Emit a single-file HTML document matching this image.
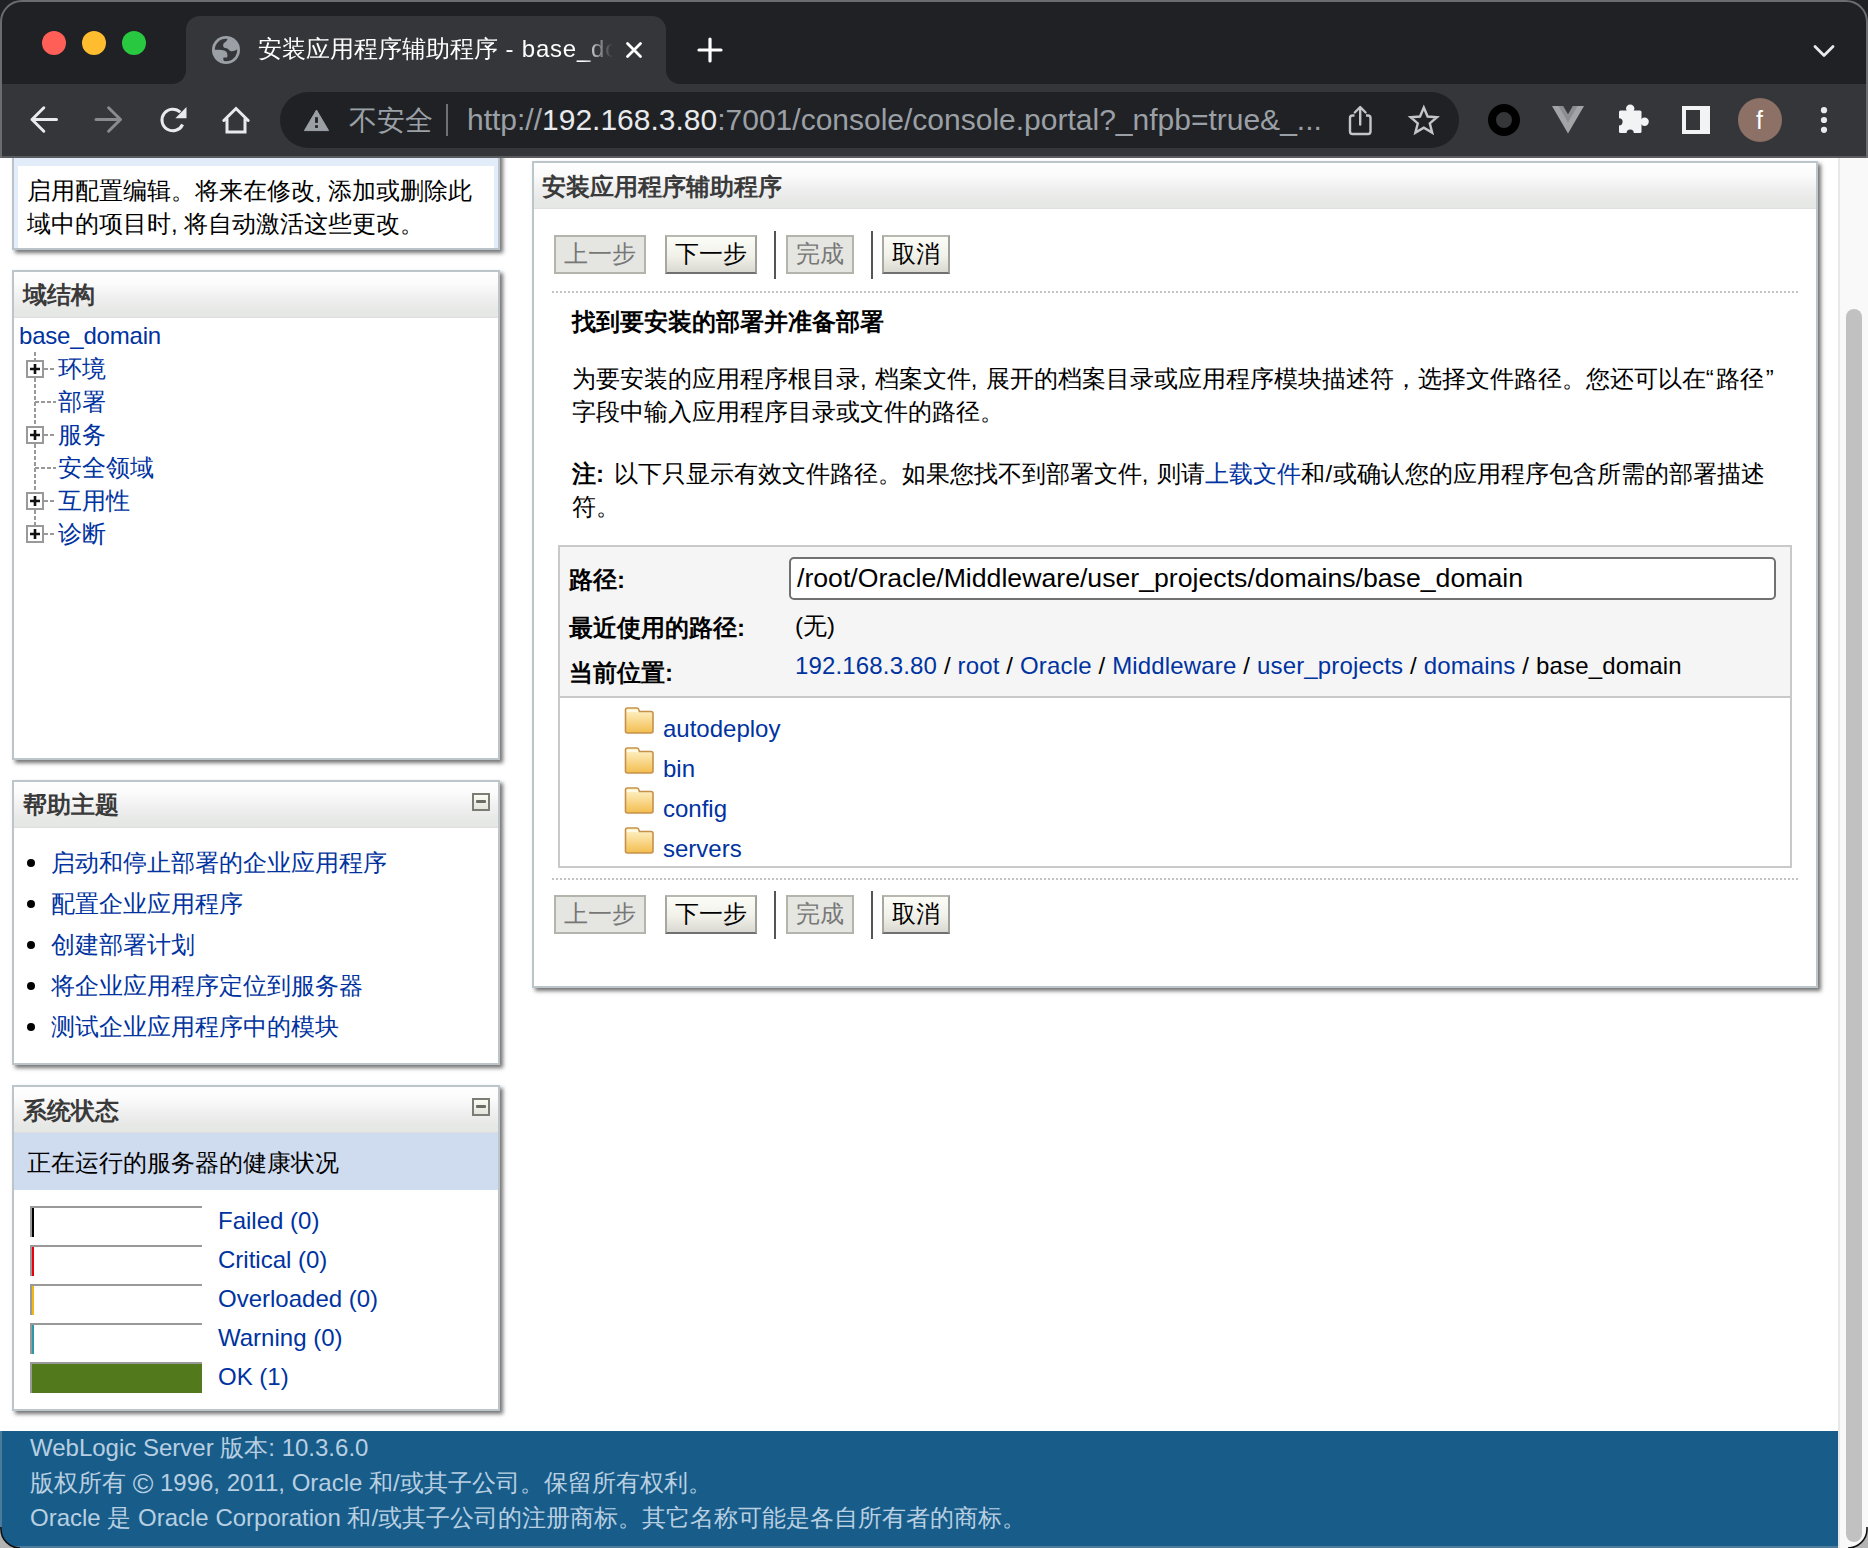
<!DOCTYPE html>
<html><head><meta charset="utf-8">
<style>
*{box-sizing:border-box}
html,body{margin:0;padding:0}
body{width:1868px;height:1548px;overflow:hidden;position:relative;background:#fff;font-family:"Liberation Sans",sans-serif;font-size:24px;line-height:33px;color:#000}
.a{position:absolute}
.nw{white-space:nowrap}
/* chrome */
#tabstrip{left:0;top:0;width:1868px;height:84px;background:#202124}
#toolbar{left:0;top:84px;width:1868px;height:72px;background:#35363a}
#tline{left:0;top:156px;width:1868px;height:2px;background:#5b5c60}
.tl{width:24px;height:24px;border-radius:50%;top:31px}
#tab{left:186px;top:16px;width:480px;height:68px;background:#35363a;border-radius:14px 14px 0 0}
.flare{width:14px;height:14px;top:70px;background:#35363a}
.flare i{position:absolute;left:0;top:0;width:14px;height:14px;background:#202124}
#omni{left:280px;top:92px;width:1179px;height:56px;border-radius:28px;background:#202124}
.w{color:#e8eaed}
.g{color:#9aa0a6}
/* page */
.panel{background:#fff;border:2px solid #bcc5c9;box-shadow:3px 3px 4px rgba(0,0,0,.55)}
.ph{left:0;top:0;right:0;height:46px;background:linear-gradient(#fefefe 0%,#fbfbfb 25%,#eeeeee 60%,#e6e8e5 85%,#e6e8e5 96%,#dcdcdc 100%)}
.pt{font-weight:bold;color:#3a3a3a}
.lk{color:#0033a0}
.mini{width:18px;height:18px;border:2px solid #7b7c74;background:linear-gradient(#fbfbf4,#e3e4db)}
.mini i{position:absolute;left:2px;top:5px;width:10px;height:3px;background:#6b6d64;border-radius:1px}
.btn{height:39px;border:2px solid #b3b4ac;background:#e5e6e1;color:#777;text-align:center;line-height:33px;padding-top:0}
.btn.en{border-color:#b8b8b0 #a0a09a #707070 #a8a8a0;background:linear-gradient(#fdfdf8,#f1f1ea 55%,#d9d9d2);color:#000}
.sep{width:2px;height:48px;background:#555}
.dot{height:2px;background-image:linear-gradient(90deg,#c4c4c4 50%,transparent 50%);background-size:4px 2px}
</style></head><body>

<!-- ===== Browser chrome ===== -->
<div id="tabstrip" class="a"></div>
<div id="toolbar" class="a"></div>
<div id="tline" class="a"></div>

<!-- chrome svg -->
<svg class="a" style="left:0;top:0" width="1868" height="158" viewBox="0 0 1868 158">
  <defs>
    <linearGradient id="fade" x1="0" x2="1" y1="0" y2="0">
      <stop offset="0" stop-color="#fff" stop-opacity="1"/>
      <stop offset="1" stop-color="#fff" stop-opacity="0"/>
    </linearGradient>
    <clipPath id="omc"><circle cx="226" cy="50" r="11.8"/></clipPath>
  </defs>
  <!-- tab -->
  <path d="M172,84 A14,14 0 0 0 186,70 L186,30 A14,14 0 0 1 200,16 L652,16 A14,14 0 0 1 666,30 L666,70 A14,14 0 0 0 680,84 Z" fill="#35363a"/>
  <!-- window border -->
  <path d="M1,158 L1,22 A21,21 0 0 1 22,1 L1846,1 A21,21 0 0 1 1867,22 L1867,158" fill="none" stroke="#6b6c6f" stroke-width="2"/>
  <!-- traffic lights -->
  <circle cx="54" cy="43" r="12" fill="#ff5f57"/>
  <circle cx="94" cy="43" r="12" fill="#febc2e"/>
  <circle cx="134" cy="43" r="12" fill="#28c840"/>
  <!-- globe -->
  <circle cx="226" cy="50" r="14" fill="#9aa0a6"/>
  <circle cx="226" cy="50" r="11.2" fill="#35363a"/>
  <g clip-path="url(#omc)" fill="#9aa0a6">
    <path d="M227.8,37 L242,37 L242,50 L237,49.6 C234,51.6 230.5,51.6 229.3,50.2 C228.3,48.8 226.5,48.2 224.3,47.8 C222.8,46.5 222.8,44 224,43 C226.3,41.8 227.6,40 227.8,37 Z"/>
    <path d="M210,49.8 L215,49.8 C220,49.8 224,50 226,51.5 C227.6,53 227.6,56 227.1,57.4 L223.5,57.4 C222.9,59 223.3,60.6 225,62 L210,64 Z"/>
  </g>
  <!-- close x -->
  <path d="M627.5,43.5 L640.5,56.5 M640.5,43.5 L627.5,56.5" stroke="#fff" stroke-width="2.8" stroke-linecap="round"/>
  <!-- plus -->
  <path d="M699,50 L721,50 M710,39 L710,61" stroke="#fff" stroke-width="3.2" stroke-linecap="round"/>
  <!-- chevron -->
  <path d="M1815,46.5 L1824,55.5 L1833,46.5" fill="none" stroke="#e8eaed" stroke-width="2.8" stroke-linecap="round" stroke-linejoin="round"/>
  <!-- back -->
  <path d="M56.5,119.5 L32,119.5 M43.8,107.8 L32,119.5 L43.8,131.2" fill="none" stroke="#e8eaed" stroke-width="3" stroke-linecap="round" stroke-linejoin="round"/>
  <!-- forward -->
  <path d="M96,119.5 L120.5,119.5 M108.6,107.8 L120.5,119.5 L108.6,131.2" fill="none" stroke="#8a8b8e" stroke-width="3" stroke-linecap="round" stroke-linejoin="round"/>
  <!-- reload -->
  <path d="M180.3,112.2 A10.8,10.8 0 1 0 182.6,124.5" fill="none" stroke="#e8eaed" stroke-width="3"/>
  <path d="M186.5,107 L186.5,118.2 L175.3,118.2 Z" fill="#e8eaed"/>
  <!-- home -->
  <path d="M223.8,120.5 L236,108.5 L248.2,120.5 M227,119 L227,132 L245,132 L245,119" fill="none" stroke="#e8eaed" stroke-width="3" stroke-linecap="round" stroke-linejoin="miter"/>
  <!-- omnibox -->
  <rect x="280" y="92" width="1179" height="56" rx="28" fill="#202124"/>
  <!-- warning -->
  <path d="M316.5,110 L328.6,130.6 L304.4,130.6 Z" fill="#9aa0a6" stroke="#9aa0a6" stroke-width="1" stroke-linejoin="round"/>
  <rect x="315.1" y="117.2" width="2.8" height="5.7" fill="#202124"/>
  <rect x="315.1" y="125.2" width="2.8" height="2.7" fill="#202124"/>
  <!-- separator -->
  <rect x="446" y="104" width="2" height="32" fill="#6f7175"/>
  <!-- share -->
  <path d="M1354.5,115.5 L1352.5,115.5 Q1350,115.5 1350,118 L1350,131.5 Q1350,134 1352.5,134 L1368,134 Q1370.5,134 1370.5,131.5 L1370.5,118 Q1370.5,115.5 1368,115.5 L1366,115.5" fill="none" stroke="#c4c5c7" stroke-width="2.4"/>
  <path d="M1360.2,124.5 L1360.2,107.5 M1354.8,112.5 L1360.2,107 L1365.6,112.5" fill="none" stroke="#c4c5c7" stroke-width="2.4" stroke-linecap="round" stroke-linejoin="round"/>
  <!-- star -->
  <path d="M1423.8,107.5 L1427.6,116.5 L1437,117.2 L1429.8,123.4 L1432.2,132.6 L1423.8,127.6 L1415.4,132.6 L1417.8,123.4 L1410.6,117.2 L1420,116.5 Z" fill="none" stroke="#c4c5c7" stroke-width="2.4" stroke-linejoin="miter"/>
  <!-- ring -->
  <circle cx="1504" cy="120" r="12" fill="none" stroke="#000" stroke-width="8"/>
  <!-- V -->
  <path d="M1552,106 L1584,106 L1568,133.5 Z" fill="#a3a4a6"/>
  <path d="M1558.5,106 L1577.5,106 L1568,122.5 Z" fill="#8c8d90"/>
  <path d="M1563.2,106 L1572.8,106 L1568,114.3 Z" fill="#35363a"/>
  <!-- puzzle -->
  <g fill="#f1f3f4">
    <rect x="1619" y="110.5" width="22.5" height="22.5" rx="1.5"/>
    <circle cx="1630.2" cy="108.6" r="4.2"/>
    <circle cx="1644.6" cy="121.8" r="4.2"/>
  </g>
  <circle cx="1619" cy="121.8" r="3.6" fill="#35363a"/>
  <circle cx="1630.2" cy="133.2" r="3.6" fill="#35363a"/>
  <!-- side panel -->
  <rect x="1682" y="106" width="28" height="28" fill="#f1f3f4"/>
  <rect x="1686" y="110" width="14" height="20" fill="#35363a"/>
  <!-- avatar -->
  <circle cx="1760" cy="120" r="22" fill="#8d7166"/>
  <!-- kebab -->
  <circle cx="1824" cy="110.2" r="3.1" fill="#e8eaed"/>
  <circle cx="1824" cy="120" r="3.1" fill="#e8eaed"/>
  <circle cx="1824" cy="129.8" r="3.1" fill="#e8eaed"/>
</svg>
<div class="a nw" style="left:258px;top:32px;font-size:24px;line-height:33px;color:#fff;width:355px;overflow:hidden;-webkit-mask-image:linear-gradient(90deg,#000 0,#000 325px,transparent 355px)">安装应用程序辅助程序<span style="letter-spacing:0.8px"> - base_domain</span></div>
<div class="a nw" style="left:1756px;top:104px;font-size:25px;line-height:33px;color:#fff;font-weight:normal">f</div>
<div class="a nw g" style="left:349px;top:104px;font-size:28px;line-height:33px">不安全</div>
<div class="a nw" style="left:467px;top:103px;font-size:30px;line-height:33px;color:#9aa0a6" id="url">http://<span style="color:#e8eaed">192.168.3.80</span>:7001/console/console.portal?_nfpb=true&amp;_...</div>


<!-- ===== Page ===== -->
<div class="a" style="left:0;top:158px;width:1868px;height:1390px;overflow:hidden">
<div class="a" style="left:0;top:-158px;width:1868px;height:1548px">

<!-- panel 1: change center -->
<div class="a panel" style="left:12px;top:100px;width:488px;height:150px;background:#e3edf9;border-color:#b9c3c9"></div>
<div class="a" style="left:18px;top:166px;width:476px;height:82px;background:#fff"></div>
<div class="a nw" style="left:27px;top:174px">启用配置编辑。将来在修改, 添加或删除此</div>
<div class="a nw" style="left:27px;top:207px">域中的项目时, 将自动激活这些更改。</div>

<!-- panel 2: domain structure -->
<div class="a panel" style="left:12px;top:270px;width:488px;height:490px"><div class="a ph"></div></div>
<div class="a nw pt" style="left:23px;top:278px">域结构</div>
<div class="a nw lk" style="left:19px;top:319px;letter-spacing:-0.2px">base_domain</div>
<svg class="a" style="left:20px;top:345px" width="40" height="200" viewBox="20 345 40 200">
  <g stroke="#999" stroke-width="2" stroke-dasharray="4 2" fill="none">
    <path d="M35,352 L35,360 M35,378 L35,426 M35,444 L35,492 M35,510 L35,525"/>
    <path d="M44,369 L56,369 M44,435 L56,435 M44,501 L56,501 M44,534 L56,534"/>
    <path d="M35,402 L56,402 M35,468 L56,468"/>
  </g>
  <g fill="#fff" stroke="#999" stroke-width="2">
    <rect x="27" y="361" width="16" height="16"/>
    <rect x="27" y="427" width="16" height="16"/>
    <rect x="27" y="493" width="16" height="16"/>
    <rect x="27" y="526" width="16" height="16"/>
  </g>
  <g stroke="#111" stroke-width="2.6">
    <path d="M30,369 L40,369 M35,364 L35,374"/>
    <path d="M30,435 L40,435 M35,430 L35,440"/>
    <path d="M30,501 L40,501 M35,496 L35,506"/>
    <path d="M30,534 L40,534 M35,529 L35,539"/>
  </g>
</svg>
<div class="a nw lk" style="left:58px;top:352px">环境</div>
<div class="a nw lk" style="left:58px;top:385px">部署</div>
<div class="a nw lk" style="left:58px;top:418px">服务</div>
<div class="a nw lk" style="left:58px;top:451px">安全领域</div>
<div class="a nw lk" style="left:58px;top:484px">互用性</div>
<div class="a nw lk" style="left:58px;top:517px">诊断</div>

<!-- panel 3: help -->
<div class="a panel" style="left:12px;top:780px;width:488px;height:285px"><div class="a ph"></div></div>
<div class="a nw pt" style="left:23px;top:788px">帮助主题</div>
<div class="a mini" style="left:472px;top:793px"><i></i></div>
<div class="a" style="left:27px;top:859px;width:8px;height:8px;border-radius:50%;background:#000"></div>
<div class="a" style="left:27px;top:900px;width:8px;height:8px;border-radius:50%;background:#000"></div>
<div class="a" style="left:27px;top:941px;width:8px;height:8px;border-radius:50%;background:#000"></div>
<div class="a" style="left:27px;top:982px;width:8px;height:8px;border-radius:50%;background:#000"></div>
<div class="a" style="left:27px;top:1023px;width:8px;height:8px;border-radius:50%;background:#000"></div>
<div class="a nw lk" style="left:51px;top:846px">启动和停止部署的企业应用程序</div>
<div class="a nw lk" style="left:51px;top:887px">配置企业应用程序</div>
<div class="a nw lk" style="left:51px;top:928px">创建部署计划</div>
<div class="a nw lk" style="left:51px;top:969px">将企业应用程序定位到服务器</div>
<div class="a nw lk" style="left:51px;top:1010px">测试企业应用程序中的模块</div>

<!-- panel 4: system status -->
<div class="a panel" style="left:12px;top:1085px;width:488px;height:326px"><div class="a ph"></div></div>
<div class="a nw pt" style="left:23px;top:1094px">系统状态</div>
<div class="a mini" style="left:472px;top:1098px"><i></i></div>
<div class="a" style="left:14px;top:1133px;width:484px;height:57px;background:#cfdcef"></div>
<div class="a nw" style="left:27px;top:1146px">正在运行的服务器的健康状况</div>
<div class="a" style="left:30px;top:1206px;width:172px;height:31px;border-top:2px solid #999;border-left:2px solid #999"><i class="a" style="left:0;top:0;width:2px;height:29px;background:#000"></i></div>
<div class="a" style="left:30px;top:1245px;width:172px;height:31px;border-top:2px solid #999;border-left:2px solid #999"><i class="a" style="left:0;top:0;width:2px;height:29px;background:#e8000b"></i></div>
<div class="a" style="left:30px;top:1284px;width:172px;height:31px;border-top:2px solid #999;border-left:2px solid #999"><i class="a" style="left:0;top:0;width:2px;height:29px;background:#f3b713"></i></div>
<div class="a" style="left:30px;top:1323px;width:172px;height:31px;border-top:2px solid #999;border-left:2px solid #999"><i class="a" style="left:0;top:0;width:2px;height:29px;background:#2d98a8"></i></div>
<div class="a" style="left:30px;top:1362px;width:172px;height:31px;border-top:2px solid #999;border-left:2px solid #999;background:#527a1d"></div>
<div class="a nw lk" style="left:218px;top:1204px">Failed (0)</div>
<div class="a nw lk" style="left:218px;top:1243px">Critical (0)</div>
<div class="a nw lk" style="left:218px;top:1282px">Overloaded (0)</div>
<div class="a nw lk" style="left:218px;top:1321px">Warning (0)</div>
<div class="a nw lk" style="left:218px;top:1360px">OK (1)</div>

<!-- main panel -->
<div class="a panel" style="left:532px;top:161px;width:1286px;height:827px"><div class="a ph"></div></div>
<div class="a nw pt" style="left:542px;top:170px">安装应用程序辅助程序</div>

<div class="a btn" style="left:554px;top:235px;width:92px">上一步</div>
<div class="a btn en" style="left:665px;top:235px;width:92px">下一步</div>
<div class="a sep" style="left:774px;top:231px"></div>
<div class="a btn" style="left:786px;top:235px;width:68px">完成</div>
<div class="a sep" style="left:871px;top:231px"></div>
<div class="a btn en" style="left:882px;top:235px;width:68px">取消</div>
<div class="a dot" style="left:552px;top:291px;width:1246px"></div>

<div class="a nw" style="left:572px;top:305px;font-weight:bold">找到要安装的部署并准备部署</div>
<div class="a nw" style="left:572px;top:362px;word-spacing:1.5px">为要安装的应用程序根目录, 档案文件, 展开的档案目录或应用程序模块描述符，选择文件路径。您还可以在<span style="letter-spacing:2px">“</span>路径<span style="display:inline-block;width:10px;text-align:right">”</span></div>
<div class="a nw" style="left:572px;top:395px">字段中输入应用程序目录或文件的路径。</div>
<div class="a nw" style="left:572px;top:457px;word-spacing:1.5px"><b>注<span style="letter-spacing:1.5px">:</span></b> 以下只显示有效文件路径。如果您找不到部署文件, 则请<span class="lk">上载文件</span>和<span style="letter-spacing:0;margin:0 1px">/</span>或确认您的应用程序包含所需的部署描述</div>
<div class="a nw" style="left:572px;top:490px">符。</div>

<!-- path table -->
<div class="a" style="left:558px;top:545px;width:1234px;height:323px;border:2px solid #c9c9c9;background:#fff"></div>
<div class="a" style="left:560px;top:547px;width:1230px;height:149px;background:#f5f5f5;border-bottom:2px solid #c9c9c9;height:151px"></div>
<div class="a nw" style="left:569px;top:563px;font-weight:bold">路径:</div>
<div class="a nw" style="left:569px;top:611px;font-weight:bold">最近使用的路径:</div>
<div class="a nw" style="left:569px;top:656px;font-weight:bold">当前位置:</div>
<div class="a" style="left:789px;top:557px;width:987px;height:43px;border:2px solid #717171;border-radius:5px;background:#fff"></div>
<div class="a nw" style="left:797px;top:560px;font-size:26.67px;line-height:36px;color:#000">/root/Oracle/Middleware/user_projects/domains/base_domain</div>
<div class="a nw" style="left:795px;top:609px">(无)</div>
<div class="a nw" style="left:795px;top:649px;letter-spacing:0.16px"><span class="lk">192.168.3.80</span> / <span class="lk">root</span> / <span class="lk">Oracle</span> / <span class="lk">Middleware</span> / <span class="lk">user_projects</span> / <span class="lk">domains</span> / base_domain</div>

<svg width="0" height="0" style="position:absolute"><defs>
  <linearGradient id="fg" x1="0" x2="0" y1="0" y2="1"><stop offset="0" stop-color="#fff6cf"/><stop offset="1" stop-color="#f3bd4f"/></linearGradient>
  <symbol id="folder" viewBox="0 0 30 27">
    <path d="M1.5,6 L1.5,3 Q1.5,1 3.5,1 L13,1 Q14.5,1 15,3 L15.5,4.5 L27,4.5 Q29,4.5 29,6.5 L29,24 Q29,26 27,26 L3.5,26 Q1.5,26 1.5,24 Z" fill="url(#fg)" stroke="#c5914a" stroke-width="1.6"/>
    <path d="M3,4 L14,4" stroke="#fffbe8" stroke-width="2"/>
  </symbol>
</defs></svg>
<svg class="a" style="left:624px;top:707px" width="30" height="27"><use href="#folder"/></svg>
<svg class="a" style="left:624px;top:747px" width="30" height="27"><use href="#folder"/></svg>
<svg class="a" style="left:624px;top:787px" width="30" height="27"><use href="#folder"/></svg>
<svg class="a" style="left:624px;top:827px" width="30" height="27"><use href="#folder"/></svg>
<div class="a nw lk" style="left:663px;top:712px">autodeploy</div>
<div class="a nw lk" style="left:663px;top:752px">bin</div>
<div class="a nw lk" style="left:663px;top:792px">config</div>
<div class="a nw lk" style="left:663px;top:832px">servers</div>

<div class="a dot" style="left:552px;top:878px;width:1246px"></div>
<div class="a btn" style="left:554px;top:895px;width:92px">上一步</div>
<div class="a btn en" style="left:665px;top:895px;width:92px">下一步</div>
<div class="a sep" style="left:774px;top:891px"></div>
<div class="a btn" style="left:786px;top:895px;width:68px">完成</div>
<div class="a sep" style="left:871px;top:891px"></div>
<div class="a btn en" style="left:882px;top:895px;width:68px">取消</div>

<!-- footer -->
<div class="a" style="left:0;top:1431px;width:1838px;height:117px;background:#185d89"></div>
<div class="a nw" style="left:30px;top:1430px;color:#b8cfe2;line-height:35px">WebLogic Server 版本: 10.3.6.0</div>
<div class="a nw" style="left:30px;top:1465px;color:#b8cfe2;line-height:35px">版权所有 <span style="font-size:28px;line-height:20px;position:relative;top:2px">©</span> 1996, 2011, Oracle 和/或其子公司。保留所有权利。</div>
<div class="a nw" style="left:30px;top:1500px;color:#b8cfe2;line-height:35px">Oracle 是 Oracle Corporation 和/或其子公司的注册商标。其它名称可能是各自所有者的商标。</div>

<div class="a" style="left:0;top:1546px;width:1838px;height:2px;background:#4d7b9b"></div>
<div class="a" style="left:0;top:1431px;width:2px;height:117px;background:#4a7a9c"></div>
<!-- scrollbar -->
<div class="a" style="left:1838px;top:158px;width:30px;height:1390px;background:#f9f9f9;border-left:2px solid #e8e8e8"></div>
<div class="a" style="left:1846px;top:309px;width:16px;height:1233px;border-radius:8px;background:#c1c1c1"></div>

</div></div>

<svg class="a" style="left:0;top:1518px" width="1868" height="30" viewBox="0 1518 1868 30">
  <path d="M0,1529 L0,1548 L20,1548 A19,19 0 0 1 1,1529 Z" fill="#b3b3b3"/>
  <path d="M1,1527 L1,1529 A19,19 0 0 0 20,1548" fill="none" stroke="#111" stroke-width="1.6"/>
  <path d="M1868,1529 L1868,1548 L1848,1548 A19,19 0 0 0 1867,1529 Z" fill="#b3b3b3"/>
  <path d="M1867,1527 L1867,1529 A19,19 0 0 1 1848,1548" fill="none" stroke="#111" stroke-width="1.6"/>
</svg>
</body></html>
